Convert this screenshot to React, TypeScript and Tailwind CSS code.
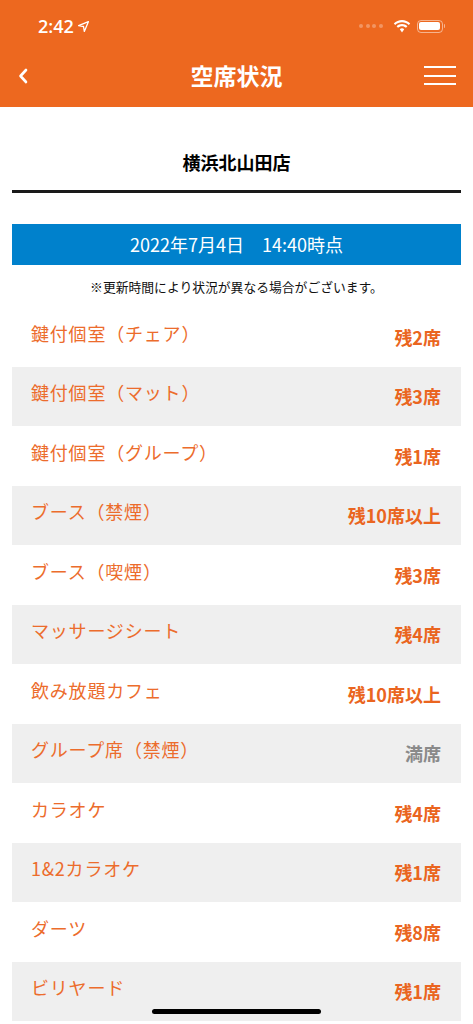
import React from 'react'

type Seat = { name: string; status: string; full?: boolean }

const seats: Seat[] = [
  { name: '鍵付個室（チェア）', status: '残2席' },
  { name: '鍵付個室（マット）', status: '残3席' },
  { name: '鍵付個室（グループ）', status: '残1席' },
  { name: 'ブース（禁煙）', status: '残10席以上' },
  { name: 'ブース（喫煙）', status: '残3席' },
  { name: 'マッサージシート', status: '残4席' },
  { name: '飲み放題カフェ', status: '残10席以上' },
  { name: 'グループ席（禁煙）', status: '満席', full: true },
  { name: 'カラオケ', status: '残4席' },
  { name: '1&2カラオケ', status: '残1席' },
  { name: 'ダーツ', status: '残8席' },
  { name: 'ビリヤード', status: '残1席' },
]

function StatusBar() {
  return (
    <div className="h-[44px] flex items-center justify-between pl-[38px] pr-[28px] pt-[8px] text-white">
      <div className="flex items-center gap-[3px]">
        <span
          className="text-[18px] font-semibold leading-none"
          style={{ fontFamily: '"Open Sans", "Noto Sans", sans-serif' }}
        >
          2:42
        </span>
        <svg width="13" height="13" viewBox="0 0 24 24" fill="none" stroke="white" strokeWidth="2.4" strokeLinejoin="round">
          <path d="M21 3 L3 10.5 L12 12 L13.5 21 Z" />
        </svg>
      </div>
      <div className="flex items-center gap-[6px]">
        <div className="flex gap-[2.5px] mr-[4px]">
          <span className="w-[4px] h-[4px] rounded-full bg-white/30" />
          <span className="w-[4px] h-[4px] rounded-full bg-white/30" />
          <span className="w-[4px] h-[4px] rounded-full bg-white/30" />
          <span className="w-[4px] h-[4px] rounded-full bg-white/30" />
        </div>
        <svg width="18" height="13" viewBox="0 0 18 13">
          <path d="M9 2.2c2.6 0 5 1 6.8 2.7l1.4-1.5C15 1.3 12.1 0 9 0S3 1.3.8 3.4l1.4 1.5C4 3.2 6.4 2.2 9 2.2z" fill="white" />
          <path d="M9 6.2c1.5 0 2.9.6 4 1.6l1.4-1.5C13 4.9 11.1 4.1 9 4.1s-4 .8-5.4 2.2L5 7.8c1.1-1 2.5-1.6 4-1.6z" fill="white" />
          <path d="M9 8.3c-.9 0-1.6.3-2.2.9L9 12.5l2.2-3.3c-.6-.6-1.3-.9-2.2-.9z" fill="white" />
        </svg>
        <div className="flex items-center">
          <div className="w-[26px] h-[13px] rounded-[4px] border border-white/50 p-[1.5px]">
            <div className="w-full h-full rounded-[2px] bg-white" />
          </div>
          <div className="w-[1.5px] h-[4px] bg-white/50 rounded-r-sm ml-[1px]" />
        </div>
      </div>
    </div>
  )
}

function NavBar() {
  return (
    <div className="h-[63px] grid grid-cols-[1fr_auto_1fr] items-center px-[17px] text-white">
      <svg width="12" height="18" viewBox="0 0 12 18" fill="none" stroke="white" strokeWidth="2.6" strokeLinecap="round" strokeLinejoin="round">
        <path d="M9 3 L3.5 9 L9 15" />
      </svg>
      <div className="text-[23px] font-bold leading-none">空席状況</div>
      <div className="flex justify-end">
        <div className="flex flex-col gap-[6.5px] w-[32px]">
          <span className="h-[2px] bg-white" />
          <span className="h-[2px] bg-white" />
          <span className="h-[2px] bg-white" />
        </div>
      </div>
    </div>
  )
}

export default function App() {
  return (
    <div
      className="relative w-[473px] min-h-[1024px] bg-white overflow-hidden"
      style={{ fontFamily: '"Noto Sans CJK JP", "Noto Sans", sans-serif' }}
    >
      <div className="bg-[#ED681F] h-[107px]">
        <StatusBar />
        <NavBar />
      </div>

      <div className="px-[12px]">
        <div className="pt-[40px] h-[83px] text-center text-[18px] font-bold text-black leading-[30px]">
          横浜北山田店
        </div>
        <div className="h-[2.5px] bg-[#1a1a1a]" />
        <div className="h-[31px]" />
        <div className="h-[41px] bg-[#0081CC] flex items-center justify-center text-white text-[18px]">
          2022年7月4日　14:40時点
        </div>
        <div className="h-[42.5px] flex items-center justify-center pt-[1px] text-[12.8px] text-[#111]">
          ※更新時間により状況が異なる場合がございます。
        </div>

        <div className="flex flex-col">
          {seats.map((s, i) => (
            <div
              key={i}
              className={
                'h-[59.5px] flex items-center justify-between pl-[19px] pr-[20px] ' +
                (i % 2 === 1 ? 'bg-[#EFEFEF]' : 'bg-white')
              }
            >
              <span className="text-[18px] text-[#EC6C2C] mb-[7px] tracking-[0.8px]">{s.name}</span>
              <span
                className={
                  'text-[18px] font-bold mt-[1px] ' + (s.full ? 'text-[#8a8a8a]' : 'text-[#EA6520]')
                }
              >
                {s.status}
              </span>
            </div>
          ))}
        </div>
      </div>

      <div className="absolute left-[152px] top-[1009px] w-[169px] h-[5px] rounded-full bg-black" />
    </div>
  )
}
